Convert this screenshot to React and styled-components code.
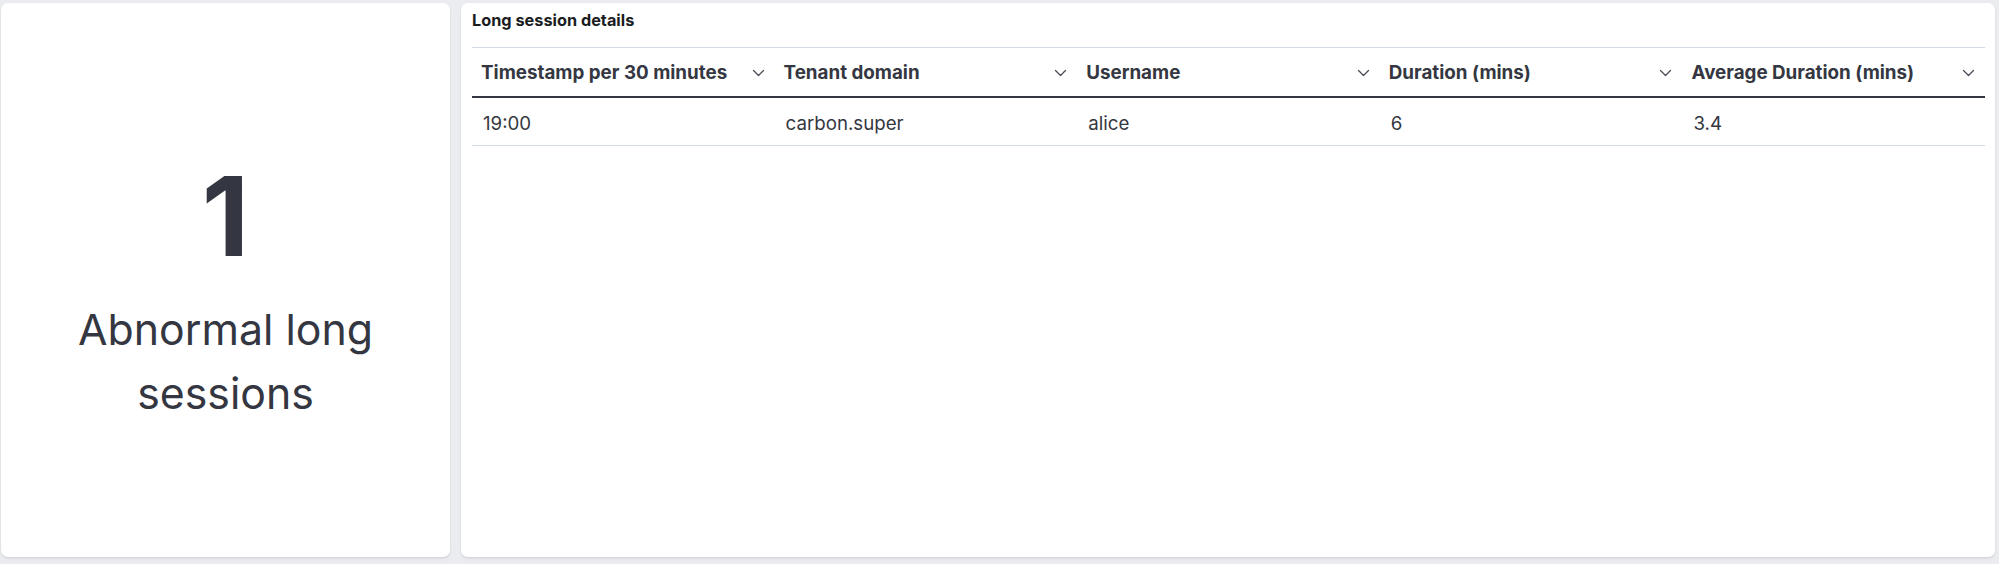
import React from 'react';
import styled, { createGlobalStyle } from 'styled-components';

const Global = createGlobalStyle`
    html, body {
        margin: 0;
        padding: 0;
        background: #eaecf0;
    }
    * {
        box-sizing: border-box;
    }
`;

const Page = styled.div`
    display: flex;
    gap: 11px;
    height: 100vh;
    padding: 3px 4px 7px 1px;
    font-family: Inter, "Noto Sans", sans-serif;
    color: #343741;
`;

const Panel = styled.div`
    background: #fff;
    border-radius: 7px;
    box-shadow: 0 1px 2px rgba(0, 0, 0, 0.08), 0 2px 3px rgba(0, 0, 0, 0.04);
`;

const MetricPanel = styled(Panel)`
    width: 449px;
    display: flex;
    flex-direction: column;
    align-items: center;
    justify-content: center;
    padding-top: 26px;
    text-align: center;
`;

const MetricValue = styled.div`
    font-size: 110px;
    line-height: 1;
    font-weight: 700;
    color: #343741;
`;

const MetricLabel = styled.div`
    margin-top: 27px;
    font-size: 42.8px;
    line-height: 64px;
    font-weight: 400;
    width: 340px;
`;

const TablePanel = styled(Panel)`
    flex: 1;
    padding: 5px 10px 10px 11px;
`;

const Title = styled.div`
    font-size: 16.3px;
    line-height: 24px;
    font-weight: 700;
    color: #1a1c21;
    margin-bottom: 15px;
`;

const Table = styled.div`
    border-top: 1px solid #d3dae6;
`;

const Row = styled.div`
    display: grid;
    grid-template-columns: repeat(5, 1fr);
    height: ${p => (p.$head ? '50px' : '48px')};
    border-bottom: ${p => (p.$head ? '2px solid #343741' : '1px solid #d3dae6')};
`;

const Cell = styled.div`
    display: flex;
    align-items: center;
    justify-content: space-between;
    padding: ${p => (p.$head ? '1px 10px 0 9px' : '3px 10px 0 11px')};
    font-size: ${p => (p.$head ? '18.8px' : '18.7px')};
    font-weight: ${p => (p.$head ? 700 : 400)};
    color: #343741;
    white-space: nowrap;
`;

const Chevron = () => (
    <svg width="13" height="8" viewBox="0 0 13 8" fill="none">
        <path d="M1.5 1.5l5 5 5-5" stroke="#4a4d57" strokeWidth="1.3" strokeLinecap="round" strokeLinejoin="round" />
    </svg>
);

const columns = ['Timestamp per 30 minutes', 'Tenant domain', 'Username', 'Duration (mins)', 'Average Duration (mins)'];
const rows = [['19:00', 'carbon.super', 'alice', '6', '3.4']];

export default function App() {
    return (
        <Page>
            <Global />
            <MetricPanel>
                <MetricValue>1</MetricValue>
                <MetricLabel>Abnormal long sessions</MetricLabel>
            </MetricPanel>
            <TablePanel>
                <Title>Long session details</Title>
                <Table>
                    <Row $head>
                        {columns.map(c => (
                            <Cell $head key={c}>
                                <span>{c}</span>
                                <Chevron />
                            </Cell>
                        ))}
                    </Row>
                    {rows.map((r, i) => (
                        <Row key={i}>
                            {r.map((v, j) => (
                                <Cell key={j}>{v}</Cell>
                            ))}
                        </Row>
                    ))}
                </Table>
            </TablePanel>
        </Page>
    );
}
